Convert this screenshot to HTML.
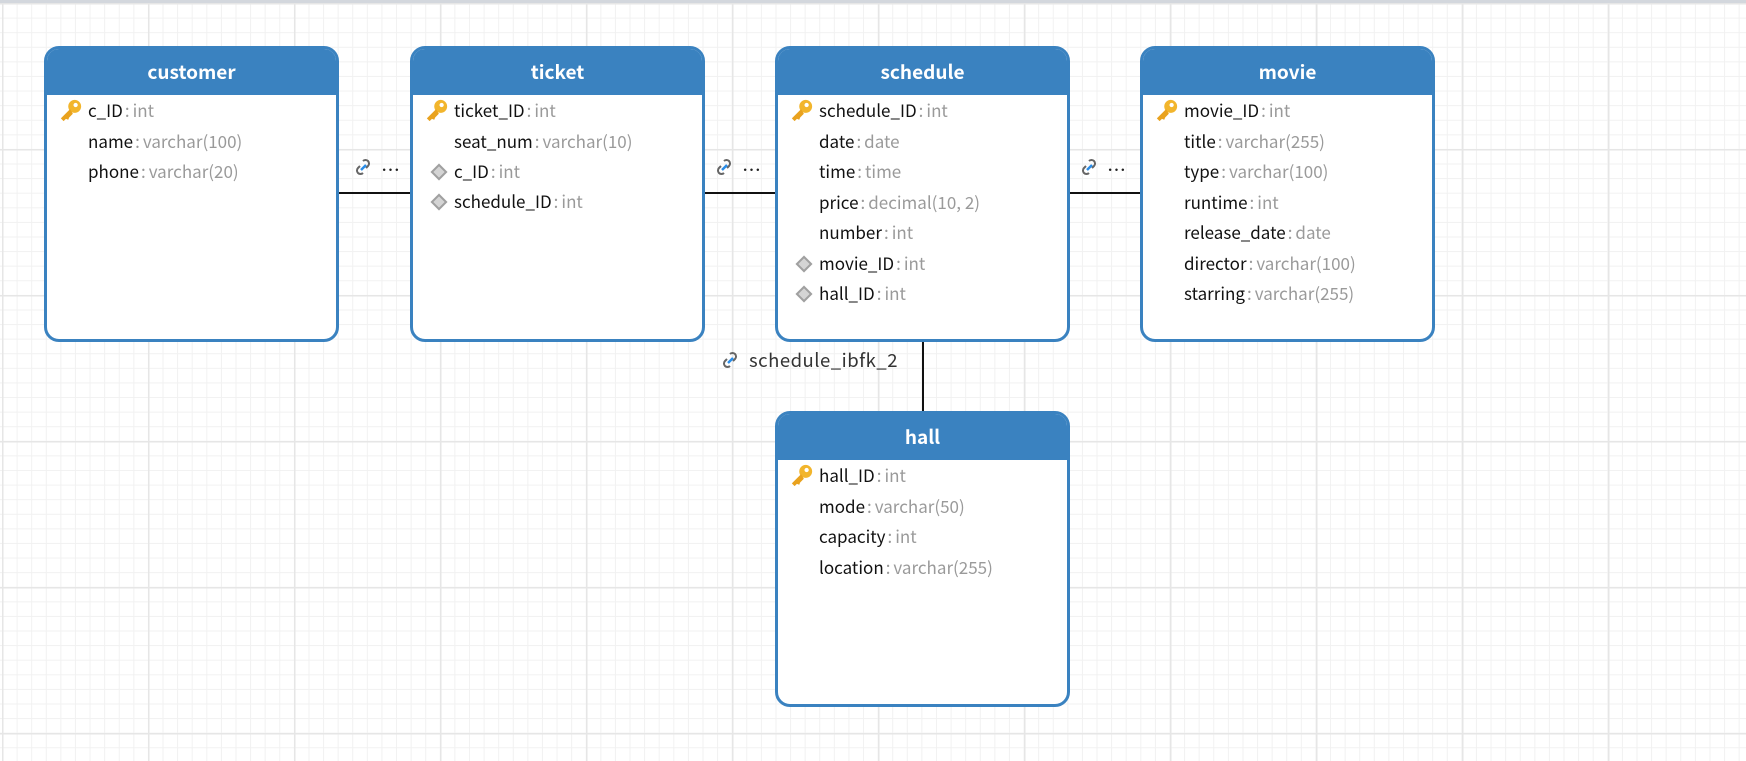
<!DOCTYPE html>
<html><head><meta charset="utf-8"><style>
html,body{margin:0;padding:0}
body{width:1746px;height:761px;overflow:hidden;position:relative;background:#fff;font-family:"Noto Sans CJK SC","Liberation Sans",sans-serif;
background-image:
linear-gradient(to right,#e6e6e6 1.5px,transparent 1.5px),
linear-gradient(to bottom,#e6e6e6 1.5px,transparent 1.5px),
linear-gradient(to right,#f1f1f1 1px,transparent 1px),
linear-gradient(to bottom,#f1f1f1 1px,transparent 1px);
background-size:146px 146px,146px 146px,14.6px 14.6px,14.6px 14.6px;
background-position:2px 3px,2px 3px,2px 3px,2px 3px;}
.topbar{position:absolute;left:0;top:0;width:1746px;height:3px;background:#d3d7dd}
.t{position:absolute;width:289px;border:3px solid #3a82c0;border-radius:15px;background:#fff;overflow:hidden}
.h{height:46px;background:#3a82c0;color:#fff;font-weight:bold;font-size:19px;text-align:center;line-height:45px}
.r{position:absolute;left:41px;font-size:17px;color:#111;line-height:20px;white-space:nowrap}
.r span{color:#9a9a9a}
.r i{font-style:normal;color:#9a9a9a;padding:0 3px 0 2px}
.k{position:absolute;left:11px;width:26px;height:24px}
.d{position:absolute;left:20px;width:8px;height:8px;border:2px solid #a0a0a0;transform:rotate(45deg);background:#d4d4d4}
.line{position:absolute;background:#111}
.lk{position:absolute;font-size:17px;color:#222;white-space:nowrap}
</style></head><body>
<div class="topbar"></div>
<svg width="0" height="0" style="position:absolute"><defs>
<g id="key"><circle cx="17" cy="8" r="7" fill="#f2b52c"/><circle cx="18" cy="6.5" r="2.3" fill="#fff"/><path d="M12 11 L2 21 L5 24 L7.5 21.5 L10 22.5 L11 20 L15 16 Z" fill="#e9a21e"/></g>
<g id="lnk"><path d="M9 3 a3 3 0 0 1 5 5 l-2 2" stroke="#666" stroke-width="2" fill="none"/><path d="M9 15 a3 3 0 0 1 -5 -5 l2 -2" stroke="#666" stroke-width="2" fill="none"/><path d="M7 12 L12 7" stroke="#2a8de8" stroke-width="2.5"/></g>
</defs></svg>

<div class="line" style="left:338px;top:192px;width:73px;height:1.5px"></div>
<div class="line" style="left:704px;top:192px;width:72px;height:1.5px"></div>
<div class="line" style="left:1069px;top:192px;width:72px;height:1.5px"></div>
<div class="line" style="left:922px;top:339px;width:1.5px;height:73px"></div>

<svg style="position:absolute;left:354px;top:158px" width="19" height="19"><use href="#lnk"/></svg><div class="lk" style="left:381px;top:156px;font-size:19px">…</div>
<svg style="position:absolute;left:715px;top:158px" width="19" height="19"><use href="#lnk"/></svg><div class="lk" style="left:742px;top:156px;font-size:19px">…</div>
<svg style="position:absolute;left:1080px;top:158px" width="19" height="19"><use href="#lnk"/></svg><div class="lk" style="left:1107px;top:156px;font-size:19px">…</div>
<svg style="position:absolute;left:721px;top:351px" width="19" height="19"><use href="#lnk"/></svg><div class="lk" style="left:749px;top:347px;font-size:18.5px;color:#333;letter-spacing:0.5px">schedule_ibfk_2</div>

<!-- customer -->
<div class="t" style="left:44px;top:46px;height:290px"><div class="h">customer</div>
<svg class="k" style="top:50px" viewBox="0 0 26 26"><use href="#key"/></svg>
<div class="r" style="top:51px">c_ID<i>:</i><span>int</span></div>
<div class="r" style="top:82px">name<i>:</i><span>varchar(100)</span></div>
<div class="r" style="top:112px">phone<i>:</i><span>varchar(20)</span></div>
</div>
<!-- ticket -->
<div class="t" style="left:410px;top:46px;height:290px"><div class="h">ticket</div>
<svg class="k" style="top:50px" viewBox="0 0 26 26"><use href="#key"/></svg>
<div class="r" style="top:51px">ticket_ID<i>:</i><span>int</span></div>
<div class="r" style="top:82px">seat_num<i>:</i><span>varchar(10)</span></div>
<div class="d" style="top:117px"></div><div class="r" style="top:112px">c_ID<i>:</i><span>int</span></div>
<div class="d" style="top:147px"></div><div class="r" style="top:142px">schedule_ID<i>:</i><span>int</span></div>
</div>
<!-- schedule -->
<div class="t" style="left:775px;top:46px;height:290px"><div class="h">schedule</div>
<svg class="k" style="top:50px" viewBox="0 0 26 26"><use href="#key"/></svg>
<div class="r" style="top:51px">schedule_ID<i>:</i><span>int</span></div>
<div class="r" style="top:82px">date<i>:</i><span>date</span></div>
<div class="r" style="top:112px">time<i>:</i><span>time</span></div>
<div class="r" style="top:143px">price<i>:</i><span>decimal(10, 2)</span></div>
<div class="r" style="top:173px">number<i>:</i><span>int</span></div>
<div class="d" style="top:209px"></div><div class="r" style="top:204px">movie_ID<i>:</i><span>int</span></div>
<div class="d" style="top:239px"></div><div class="r" style="top:234px">hall_ID<i>:</i><span>int</span></div>
</div>
<!-- movie -->
<div class="t" style="left:1140px;top:46px;height:290px"><div class="h">movie</div>
<svg class="k" style="top:50px" viewBox="0 0 26 26"><use href="#key"/></svg>
<div class="r" style="top:51px">movie_ID<i>:</i><span>int</span></div>
<div class="r" style="top:82px">title<i>:</i><span>varchar(255)</span></div>
<div class="r" style="top:112px">type<i>:</i><span>varchar(100)</span></div>
<div class="r" style="top:143px">runtime<i>:</i><span>int</span></div>
<div class="r" style="top:173px">release_date<i>:</i><span>date</span></div>
<div class="r" style="top:204px">director<i>:</i><span>varchar(100)</span></div>
<div class="r" style="top:234px">starring<i>:</i><span>varchar(255)</span></div>
</div>
<!-- hall -->
<div class="t" style="left:775px;top:411px;height:290px"><div class="h">hall</div>
<svg class="k" style="top:50px" viewBox="0 0 26 26"><use href="#key"/></svg>
<div class="r" style="top:51px">hall_ID<i>:</i><span>int</span></div>
<div class="r" style="top:82px">mode<i>:</i><span>varchar(50)</span></div>
<div class="r" style="top:112px">capacity<i>:</i><span>int</span></div>
<div class="r" style="top:143px">location<i>:</i><span>varchar(255)</span></div>
</div>
</body></html>
